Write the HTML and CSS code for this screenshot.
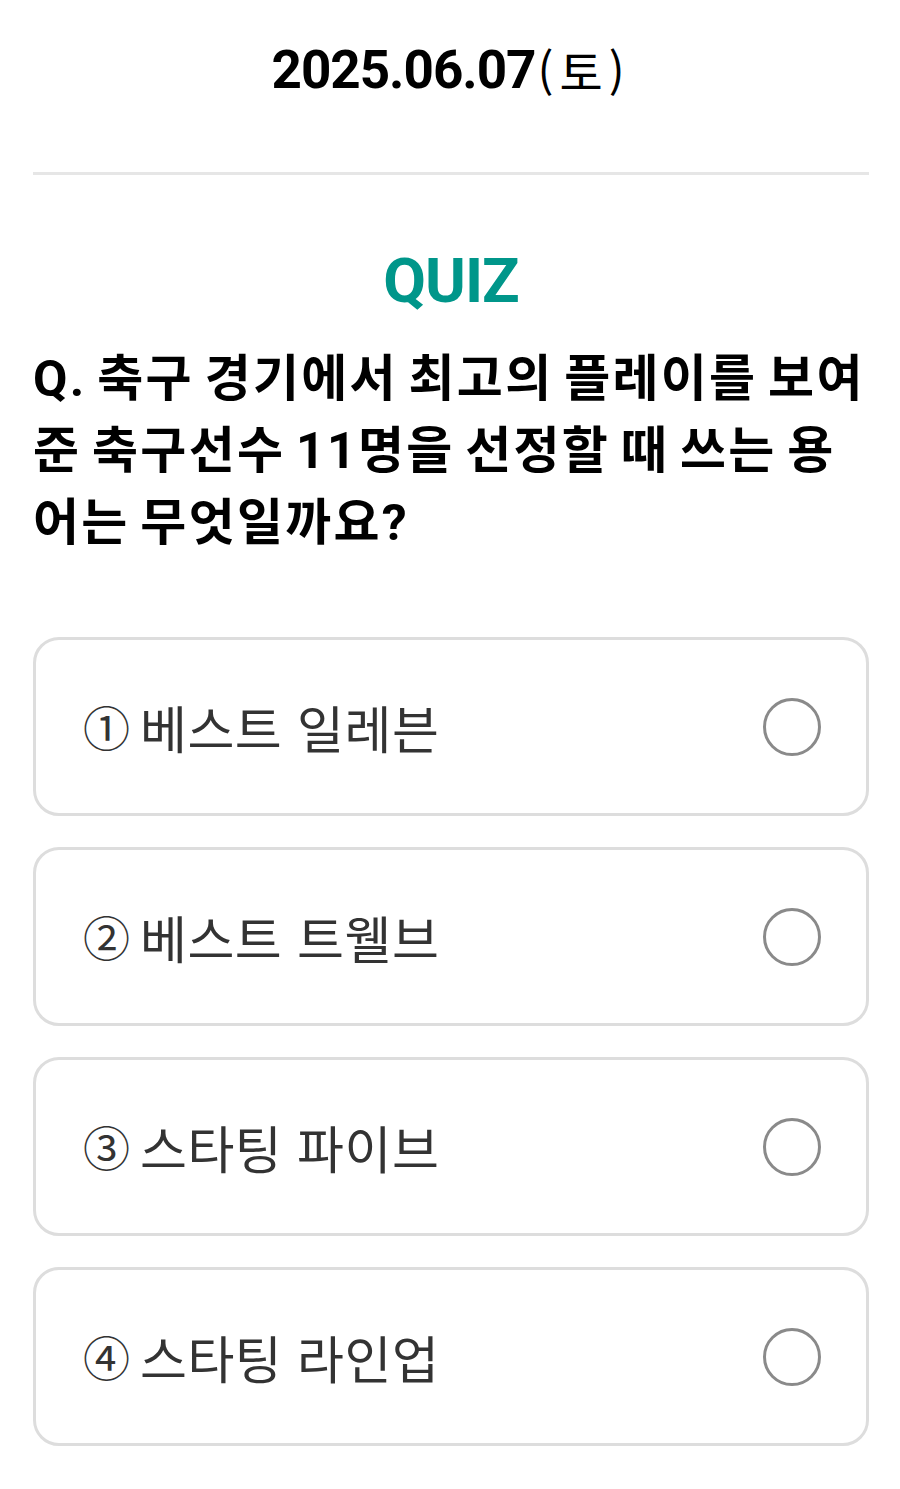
FILE: index.html
```html
<!DOCTYPE html>
<html lang="ko">
<head>
<meta charset="utf-8">
<link rel="stylesheet" href="styles.css">
</head>
<body>
<div class="page">
  <header class="date-bar">
    <span class="date">2025.06.07</span><span class="day">(토)</span>
  </header>
  <section class="quiz">
    <h1 class="quiz-title">QUIZ</h1>
    <p class="question">Q. 축구 경기에서 최고의 플레이를 보여 준 축구선수 11명을 선정할 때 쓰는 용어는 무엇일까요?</p>
    <ul class="options">
      <li class="option"><span class="label"><span class="num">①</span>베스트 일레븐</span><span class="radio"></span></li>
      <li class="option"><span class="label"><span class="num">②</span>베스트 트웰브</span><span class="radio"></span></li>
      <li class="option"><span class="label"><span class="num">③</span>스타팅 파이브</span><span class="radio"></span></li>
      <li class="option"><span class="label"><span class="num">④</span>스타팅 라인업</span><span class="radio"></span></li>
    </ul>
  </section>
</div>
</body>
</html>
```
FILE: styles.css
```css
html, body {
  margin: 0;
  padding: 0;
  background: #ffffff;
}
body {
  font-family: Roboto, "Noto Sans CJK KR", sans-serif;
  color: #000;
}
.page {
  padding: 0 31px 0 33px;
}
.date-bar {
  border-bottom: 3px solid #e6e6e6;
  display: flex;
  justify-content: center;
  align-items: flex-start;
  padding-top: 38px;
  box-sizing: border-box;
  height: 175px;
}
.date {
  font-size: 53px;
  font-weight: 700;
  letter-spacing: -1px;
  line-height: 64px;
}
.day {
  font-family: "Noto Sans CJK KR", sans-serif;
  font-size: 47px;
  font-weight: 400;
  line-height: 64px;
  letter-spacing: 6px;
  margin-left: 2px;
}
.quiz-title {
  margin: 74px 0 0;
  text-align: center;
  color: #00968a;
  font-size: 62px;
  font-weight: 700;
  line-height: 64px;
  letter-spacing: -1px;
}
.question {
  margin: 30px 0 0;
  font-family: Roboto, "Noto Sans CJK KR", sans-serif;
  font-size: 50px;
  font-weight: 700;
  line-height: 72px;
  letter-spacing: 2.3px;
  word-spacing: -4px;
}
.options {
  list-style: none;
  margin: 78px 0 0;
  padding: 0;
  display: flex;
  flex-direction: column;
  gap: 31px;
}
.option {
  height: 179px;
  box-sizing: border-box;
  border: 3px solid #dddddd;
  border-radius: 26px;
  display: flex;
  align-items: center;
  justify-content: space-between;
  padding: 0 45px 0 47px;
}
.label {
  font-family: "Noto Sans CJK KR", sans-serif;
  font-size: 51px;
  font-weight: 400;
  color: #333333;
  letter-spacing: 0.5px;
}
.num {
  font-size: 47px;
  margin-right: 10px;
  letter-spacing: 0;
  vertical-align: 3px;
}
.radio {
  width: 58px;
  height: 58px;
  box-sizing: border-box;
  border: 3px solid #8a8a8a;
  border-radius: 50%;
}
```
